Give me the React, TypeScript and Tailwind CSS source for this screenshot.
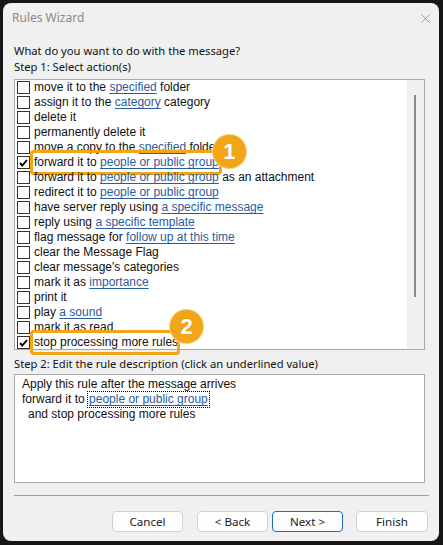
import { X } from "lucide-react"

type Part = string | { link: string }

type Action = {
  parts: Part[]
  checked?: boolean
  callout?: number
}

const actions: Action[] = [
  { parts: ["move it to the ", { link: "specified" }, " folder"] },
  { parts: ["assign it to the ", { link: "category" }, " category"] },
  { parts: ["delete it"] },
  { parts: ["permanently delete it"] },
  { parts: ["move a copy to the ", { link: "specified" }, " folder"] },
  { parts: ["forward it to ", { link: "people or public group" }], checked: true, callout: 1 },
  { parts: ["forward it to ", { link: "people or public group" }, " as an attachment"] },
  { parts: ["redirect it to ", { link: "people or public group" }] },
  { parts: ["have server reply using ", { link: "a specific message" }] },
  { parts: ["reply using ", { link: "a specific template" }] },
  { parts: ["flag message for ", { link: "follow up at this time" }] },
  { parts: ["clear the Message Flag"] },
  { parts: ["clear message's categories"] },
  { parts: ["mark it as ", { link: "importance" }] },
  { parts: ["print it"] },
  { parts: ["play ", { link: "a sound" }] },
  { parts: ["mark it as read"] },
  { parts: ["stop processing more rules"], checked: true, callout: 2 },
]

const ui = "font-['Noto_Sans',sans-serif] text-[11.2px]"
const list = "font-['Liberation_Sans',Arial,sans-serif] text-[12px]"

function Checkbox({ checked }: { checked?: boolean }) {
  return (
    <div className="w-[13px] h-[13px] border border-[#333] bg-white flex items-center justify-center shrink-0">
      {checked && (
        <svg width="9" height="8" viewBox="0 0 9 8">
          <path d="M1 4 L3.3 6.5 L8 1" fill="none" stroke="#000" strokeWidth="1.9" />
        </svg>
      )}
    </div>
  )
}

function Callout({ n }: { n: number }) {
  // badge offsets differ slightly between the two highlighted rows
  const pos = n === 1 ? "right-[-27px] top-[-20px]" : "right-[-25px] top-[-25px]"
  const box = n === 1 ? "right-[-3px]" : "right-[-2px]"
  return (
    <>
      <div className={`absolute left-[-4px] ${box} top-[-5px] bottom-[-5px] border-[3px] border-[#f2a516] rounded-[4px] pointer-events-none`} />
      <div
        className={`absolute ${pos} w-[33px] h-[33px] rounded-full bg-[#f2a516] ring-1 ring-[#f8cf7d] flex items-center justify-center text-white font-bold text-[22px] font-['Liberation_Sans',Arial,sans-serif] leading-none z-10`}
      >
        {n}
      </div>
    </>
  )
}

function Parts({ parts }: { parts: Part[] }) {
  return (
    <>
      {parts.map((p, i) =>
        typeof p === "string" ? (
          <span key={i} className="whitespace-pre">{p}</span>
        ) : (
          <span key={i} className="text-[#2b5c9c] underline underline-offset-2 whitespace-pre">
            {p.link}
          </span>
        )
      )}
    </>
  )
}

export default function App() {
  return (
    <div className="w-[443px] h-[545px] bg-[#161616] pl-[3px] pt-[3px] pr-[4px] pb-[4px]">
      <div className="h-full rounded-[8px] bg-[#f0f0f0] flex flex-col overflow-hidden">
        {/* Title bar */}
        <div className="h-[30px] flex items-center justify-between pl-[9px] pr-[6px] shrink-0">
          <span className={`${ui} text-[12px] text-[#8a8a8a]`}>Rules Wizard</span>
          <X className="w-[15px] h-[15px] text-[#777]" strokeWidth={1.1} />
        </div>

        <div className={`px-[11px] flex flex-col text-[#111] ${ui}`}>
          <div className="mt-[10px] leading-[16px]">What do you want to do with the message?</div>
          <div className="leading-[16px]">Step 1: Select action(s)</div>

          {/* Action list */}
          <div className="mt-[4px] w-[411px] h-[271px] border border-[#a9a9a9] bg-white flex">
            <div className={`flex-1 flex flex-col ${list} text-[#111]`}>
              {actions.map((a, i) => (
                <div key={i} className="h-[15px] flex items-center pl-[2px]">
                  <Checkbox checked={a.checked} />
                  <span className="relative ml-[4px] leading-[15px]">
                    <Parts parts={a.parts} />
                    {a.callout && <Callout n={a.callout} />}
                  </span>
                </div>
              ))}
            </div>
            <div className="w-[17px] bg-[#f0f0f0] flex justify-center pt-[15px]">
              <div className="w-[2px] h-[202px] bg-[#8b8b8b] ml-[-1px]" />
            </div>
          </div>

          <div className="mt-[6px] leading-[16px]">Step 2: Edit the rule description (click an underlined value)</div>

          {/* Rule description */}
          <div className={`mt-[2px] w-[411px] h-[109px] border border-[#a9a9a9] bg-white pl-[7px] pt-[2px] ${list} text-[#111] leading-[15px]`}>
            <div>Apply this rule after the message arrives</div>
            <div className="flex">
              <span className="whitespace-pre">forward it to </span>
              <span className="outline outline-1 outline-dotted outline-black text-[#2b5c9c] underline underline-offset-2 px-[1px]">
                people or public group
              </span>
            </div>
            <div className="pl-[6px]">and stop processing more rules</div>
          </div>

          <div className="mt-[12px] w-[415px] h-px bg-[#a0a0a0]" />

          {/* Buttons */}
          <div className="mt-[15px] flex pl-[98px] text-[11.6px]">
            <button className="w-[71px] h-[21px] rounded-[4px] border border-[#d0d0d0] bg-[#fdfdfd] text-[#1a1a1a] leading-none">Cancel</button>
            <button className="ml-[14px] w-[71px] h-[21px] rounded-[4px] border border-[#d0d0d0] bg-[#fdfdfd] text-[#1a1a1a] leading-none">&lt; Back</button>
            <button className="ml-[4px] w-[71px] h-[21px] rounded-[4px] border border-[#1a6fc4] bg-[#fdfdfd] text-[#1a1a1a] leading-none">Next &gt;</button>
            <button className="ml-[13px] w-[72px] h-[21px] rounded-[4px] border border-[#d0d0d0] bg-[#fdfdfd] text-[#1a1a1a] leading-none">Finish</button>
          </div>
        </div>
      </div>
    </div>
  )
}
